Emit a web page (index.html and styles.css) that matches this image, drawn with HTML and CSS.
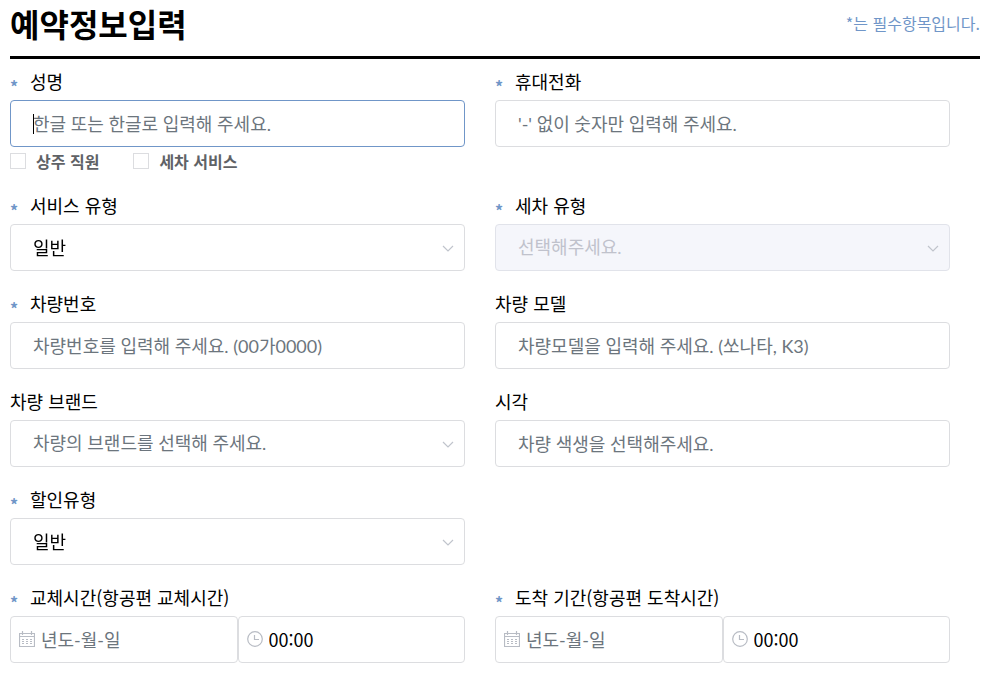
FILE: index.html
```html
<!DOCTYPE html>
<html lang="ko">
<head>
  <meta charset="UTF-8" />
  <meta name="viewport" content="width=device-width, initial-scale=1.0"/>
  <title>예약정보입력</title>
  <link rel="stylesheet" href="styles.css">
</head>
<body>
  <header class="form-header">
    <h1>예약정보입력</h1>
    <p class="note">*는 필수항목입니다.</p>
  </header>

  <form class="form-grid">
    <div class="field">
      <label class="label" for="name"><span class="req">*</span>성명</label>
      <div class="caret-wrap">
        <input class="control" id="name" type="text" placeholder="한글 또는 한글로 입력해 주세요." autofocus>
        <span class="caret"></span>
      </div>
      <div class="checks">
        <label class="check"><input type="checkbox">상주 직원</label>
        <label class="check"><input type="checkbox">세차 서비스</label>
      </div>
    </div>

    <div class="field">
      <label class="label" for="phone"><span class="req">*</span>휴대전화</label>
      <input class="control" id="phone" type="tel" placeholder="'-' 없이 숫자만 입력해 주세요.">
    </div>

    <div class="field">
      <label class="label" for="service"><span class="req">*</span>서비스 유형</label>
      <div class="select-wrap">
        <select class="control" id="service"><option>일반</option></select>
        <svg class="arrow" viewBox="0 0 12 8"><path d="M1 1l5 5 5-5"/></svg>
      </div>
    </div>

    <div class="field">
      <label class="label" for="wash"><span class="req">*</span>세차 유형</label>
      <div class="select-wrap">
        <select class="control" id="wash" disabled><option>선택해주세요.</option></select>
        <svg class="arrow" viewBox="0 0 12 8"><path d="M1 1l5 5 5-5"/></svg>
      </div>
    </div>

    <div class="field">
      <label class="label" for="carNo"><span class="req">*</span>차량번호</label>
      <input class="control" id="carNo" type="text" placeholder="차량번호를 입력해 주세요. (00가0000)">
    </div>

    <div class="field">
      <label class="label" for="model">차량 모델</label>
      <input class="control" id="model" type="text" placeholder="차량모델을 입력해 주세요. (쏘나타, K3)">
    </div>

    <div class="field">
      <label class="label" for="brand">차량 브랜드</label>
      <div class="select-wrap">
        <select class="control empty" id="brand"><option>차량의 브랜드를 선택해 주세요.</option></select>
        <svg class="arrow" viewBox="0 0 12 8"><path d="M1 1l5 5 5-5"/></svg>
      </div>
    </div>

    <div class="field">
      <label class="label" for="color">시각</label>
      <input class="control" id="color" type="text" placeholder="차량 색생을 선택해주세요.">
    </div>

    <div class="field full">
      <label class="label" for="discount"><span class="req">*</span>할인유형</label>
      <div class="select-wrap">
        <select class="control" id="discount"><option>일반</option></select>
        <svg class="arrow" viewBox="0 0 12 8"><path d="M1 1l5 5 5-5"/></svg>
      </div>
    </div>

    <div class="field">
      <label class="label" for="outDate"><span class="req">*</span>교체시간(항공편 교체시간)</label>
      <div class="datetime">
        <div class="icon-input">
          <svg class="icon" viewBox="0 0 16 16"><path d="M.5 2.5h15v13H.5zM.5 5.5h15M3.5 0v4M12.5 0v4"/><path class="dots" d="M3 8.5h10M3 10.5h10M3 12.5h10"/></svg>
          <input class="control" id="outDate" type="text" placeholder="년도-월-일">
        </div>
        <div class="icon-input">
          <svg class="icon" viewBox="0 0 16 16"><circle cx="8" cy="8" r="7.3"/><path d="M7.5 4v4.5H12"/></svg>
          <input class="control" type="text" value="00:00" aria-label="교체시간">
        </div>
      </div>
    </div>

    <div class="field">
      <label class="label" for="inDate"><span class="req">*</span>도착 기간(항공편 도착시간)</label>
      <div class="datetime">
        <div class="icon-input">
          <svg class="icon" viewBox="0 0 16 16"><path d="M.5 2.5h15v13H.5zM.5 5.5h15M3.5 0v4M12.5 0v4"/><path class="dots" d="M3 8.5h10M3 10.5h10M3 12.5h10"/></svg>
          <input class="control" id="inDate" type="text" placeholder="년도-월-일">
        </div>
        <div class="icon-input">
          <svg class="icon" viewBox="0 0 16 16"><circle cx="8" cy="8" r="7.3"/><path d="M7.5 4v4.5H12"/></svg>
          <input class="control" type="text" value="00:00" aria-label="도착시간">
        </div>
      </div>
    </div>
  </form>
</body>
</html>
```

FILE: styles.css
```css
* {
  box-sizing: border-box;
}
body {
  margin: 0;
  padding: 0 11px 0 10px;
  background: #fff;
  color: #000;
  font-family: "Noto Sans CJK KR", sans-serif;
  font-size: 18px;
}
.form-header {
  display: flex;
  align-items: center;
  justify-content: space-between;
  height: 59px;
  padding-bottom: 11px;
  border-bottom: 3px solid #000;
}
h1 {
  margin: 0;
  font-size: 32px;
  line-height: 44px;
  font-weight: 700;
}
.note {
  margin: 0;
  font-size: 16px;
  line-height: 24px;
  color: #7096c8;
}
.form-grid {
  display: grid;
  grid-template-columns: 1fr 1fr;
  padding-top: 5px;
}
.field {
  min-width: 0;
  padding-right: 30px;
  margin-bottom: 15px;
}
.full {
  grid-column: 1 / -1;
  width: 50%;
}
.label {
  display: flex;
  height: 36px;
  line-height: 34px;
}
.req {
  width: 20px;
  padding-top: 5px;
  font-size: 16px;
  font-weight: 700;
  color: #7096c8;
}
.control {
  display: block;
  width: 100%;
  height: 47px;
  padding: 0 22px 2px;
  border: 1px solid #dcdde0;
  border-radius: 4px;
  outline: none;
  background: #fff;
  color: #000;
  font: inherit;
  appearance: none;
}
.control:focus {
  border-color: #7096c8;
}
.control::placeholder {
  color: #6c757d;
  font-family: Lato, "Noto Sans CJK KR", sans-serif;
  opacity: 1;
}
.control:disabled {
  background: #f5f6fb;
  border-color: #e1e3ea;
  color: #c0c2cc;
  font-family: Lato, "Noto Sans CJK KR", sans-serif;
  opacity: 1;
}
.empty {
  color: #6c757d;
  font-family: Lato, "Noto Sans CJK KR", sans-serif;
}
.select-wrap,
.caret-wrap,
.icon-input {
  position: relative;
}
.caret-wrap .control {
  caret-color: transparent;
}
.caret {
  display: none;
  position: absolute;
  top: 14px;
  left: 23px;
  width: 1px;
  height: 20px;
  background: #000;
}
.control:focus + .caret {
  display: block;
}
.arrow {
  position: absolute;
  top: 21px;
  right: 11px;
  width: 12px;
  height: 8px;
  fill: none;
  stroke: #c0c4cc;
  stroke-width: 1.2;
  pointer-events: none;
}
.checks {
  display: flex;
  gap: 34px;
  height: 26px;
  padding-top: 2px;
}
.check {
  display: flex;
  align-items: center;
  gap: 10px;
  font-size: 16px;
  font-weight: 700;
  color: #606266;
}
.check input {
  width: 16px;
  height: 16px;
  margin: 0;
  border: 1px solid #dcdde0;
  appearance: none;
}
.datetime {
  display: grid;
  grid-template-columns: 1fr 1fr;
}
.icon-input .control {
  padding: 0 8px 2px 30px;
}
.icon {
  position: absolute;
  top: 15px;
  left: 9px;
  width: 16px;
  height: 16px;
  fill: none;
  stroke: #b8bcc4;
  stroke-width: 1.2;
}
.dots {
  stroke-dasharray: 2 2;
}
```
